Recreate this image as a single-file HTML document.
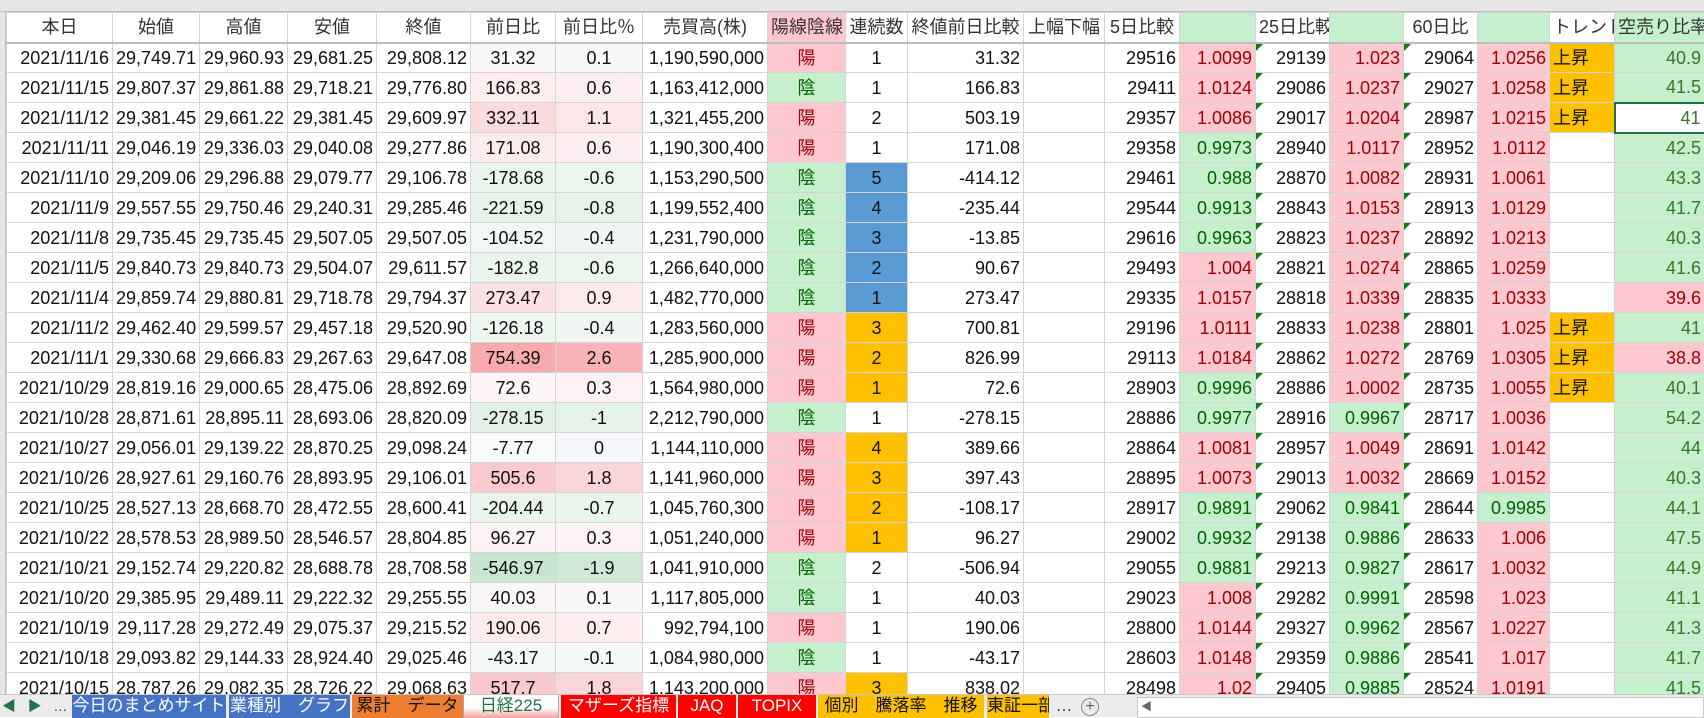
<!DOCTYPE html>
<html><head><meta charset="utf-8">
<style>
*{margin:0;padding:0;box-sizing:border-box}
body{width:1704px;height:717px;overflow:hidden;background:#fff;font-family:"Liberation Sans","Noto Sans CJK JP",sans-serif;position:relative}
#colhdr{position:absolute;left:0;top:0;width:1704px;height:12px;background:#e6e6e6;border-bottom:1px solid #bdbdbd}
#rowhdr{position:absolute;left:0;top:12px;width:6px;height:682px;background:#e6e6e6;border-right:1px solid #bdbdbd}
table{position:absolute;left:6px;top:12px;border-collapse:collapse;table-layout:fixed;width:1698px}
td{height:30px;border:1px solid #d4d4d4;font-size:18px;color:#111;white-space:nowrap;overflow:hidden;padding:0 3px;text-align:right;line-height:28px;position:relative}
tr.h td{text-align:center;color:#333;border-bottom:2px solid #bdbdbd}
td.c{text-align:center}
td.l{text-align:left}
.pk{background:#ffc7ce;color:#9c0006}
.gn{background:#c6efce;color:#006100}
.or{background:#ffc000}
.bl{background:#5b9bd5}
.tg{background:#c6efce;color:#38762a}
.tp{background:#ffc7ce;color:#9c0006}
.tri::before{content:"";position:absolute;left:0;top:0;border-top:7px solid #107c10;border-right:7px solid transparent}
#tabs{position:absolute;left:0;top:694px;width:1704px;height:23px;background:#ececec;border-top:1px solid #c8c8c8;font-size:17px}
.tab{position:absolute;top:0;height:23px;line-height:22px;text-align:center;white-space:nowrap;overflow:hidden}
</style></head><body>
<div id="colhdr"></div><div id="rowhdr"></div>
<table>
<colgroup><col style="width:106px"><col style="width:87px"><col style="width:88px"><col style="width:89px"><col style="width:94px"><col style="width:85px"><col style="width:87px"><col style="width:125px"><col style="width:78px"><col style="width:62px"><col style="width:116px"><col style="width:81px"><col style="width:75px"><col style="width:76px"><col style="width:74px"><col style="width:74px"><col style="width:74px"><col style="width:72px"><col style="width:65px"><col style="width:90px"></colgroup>
<tr class="h"><td>本日</td><td>始値</td><td>高値</td><td>安値</td><td>終値</td><td>前日比</td><td>前日比％</td><td>売買高(株)</td><td class="pk">陽線陰線</td><td>連続数</td><td>終値前日比較</td><td class="l">上幅下幅</td><td class="l">5日比較</td><td class="gn"></td><td class="l">25日比較</td><td class="gn"></td><td class="l">60日比</td><td class="gn"></td><td class="l">トレンド</td><td class="tg l">空売り比率</td></tr>
<tr><td>2021/11/16</td><td>29,749.71</td><td>29,960.93</td><td>29,681.25</td><td>29,808.12</td><td class="c" style="background:#fbf8fb">31.32</td><td class="c" style="background:#fbf8fb">0.1</td><td>1,190,590,000</td><td class="c pk">陽</td><td class="c">1</td><td>31.32</td><td></td><td>29516</td><td class="pk">1.0099</td><td class="tri">29139</td><td class="pk">1.023</td><td class="tri">29064</td><td class="pk">1.0256</td><td class="l or">上昇</td><td class="tg">40.9</td></tr>
<tr><td>2021/11/15</td><td>29,807.37</td><td>29,861.88</td><td>29,718.21</td><td>29,776.80</td><td class="c" style="background:#fdedef">166.83</td><td class="c" style="background:#fdeff1">0.6</td><td>1,163,412,000</td><td class="c gn">陰</td><td class="c">1</td><td>166.83</td><td></td><td>29411</td><td class="pk">1.0124</td><td class="tri">29086</td><td class="pk">1.0237</td><td class="tri">29027</td><td class="pk">1.0258</td><td class="l or">上昇</td><td class="tg">41.5</td></tr>
<tr><td>2021/11/12</td><td>29,381.45</td><td>29,661.22</td><td>29,381.45</td><td>29,609.97</td><td class="c" style="background:#fbdbdd">332.11</td><td class="c" style="background:#fce6e8">1.1</td><td>1,321,455,200</td><td class="c pk">陽</td><td class="c">2</td><td>503.19</td><td></td><td>29357</td><td class="pk">1.0086</td><td class="tri">29017</td><td class="pk">1.0204</td><td class="tri">28987</td><td class="pk">1.0215</td><td class="l or">上昇</td><td style="border:2px solid #217346;color:#38762a">41</td></tr>
<tr><td>2021/11/11</td><td>29,046.19</td><td>29,336.03</td><td>29,040.08</td><td>29,277.86</td><td class="c" style="background:#fdecee">171.08</td><td class="c" style="background:#fdeff1">0.6</td><td>1,190,300,400</td><td class="c pk">陽</td><td class="c">1</td><td>171.08</td><td></td><td>29358</td><td class="gn">0.9973</td><td class="tri">28940</td><td class="pk">1.0117</td><td class="tri">28952</td><td class="pk">1.0112</td><td></td><td class="tg">42.5</td></tr>
<tr><td>2021/11/10</td><td>29,209.06</td><td>29,296.88</td><td>29,079.77</td><td>29,106.78</td><td class="c" style="background:#eaf5ee">-178.68</td><td class="c" style="background:#ebf6ef">-0.6</td><td>1,153,290,500</td><td class="c gn">陰</td><td class="c bl">5</td><td>-414.12</td><td></td><td>29461</td><td class="gn">0.988</td><td class="tri">28870</td><td class="pk">1.0082</td><td class="tri">28931</td><td class="pk">1.0061</td><td></td><td class="tg">43.3</td></tr>
<tr><td>2021/11/9</td><td>29,557.55</td><td>29,750.46</td><td>29,240.31</td><td>29,285.46</td><td class="c" style="background:#e6f3ea">-221.59</td><td class="c" style="background:#e6f3ea">-0.8</td><td>1,199,552,400</td><td class="c gn">陰</td><td class="c bl">4</td><td>-235.44</td><td></td><td>29544</td><td class="gn">0.9913</td><td class="tri">28843</td><td class="pk">1.0153</td><td class="tri">28913</td><td class="pk">1.0129</td><td></td><td class="tg">41.7</td></tr>
<tr><td>2021/11/8</td><td>29,735.45</td><td>29,735.45</td><td>29,507.05</td><td>29,507.05</td><td class="c" style="background:#f1f8f3">-104.52</td><td class="c" style="background:#f0f7f2">-0.4</td><td>1,231,790,000</td><td class="c gn">陰</td><td class="c bl">3</td><td>-13.85</td><td></td><td>29616</td><td class="gn">0.9963</td><td class="tri">28823</td><td class="pk">1.0237</td><td class="tri">28892</td><td class="pk">1.0213</td><td></td><td class="tg">40.3</td></tr>
<tr><td>2021/11/5</td><td>29,840.73</td><td>29,840.73</td><td>29,504.07</td><td>29,611.57</td><td class="c" style="background:#eaf5ee">-182.8</td><td class="c" style="background:#ebf6ef">-0.6</td><td>1,266,640,000</td><td class="c gn">陰</td><td class="c bl">2</td><td>90.67</td><td></td><td>29493</td><td class="pk">1.004</td><td class="tri">28821</td><td class="pk">1.0274</td><td class="tri">28865</td><td class="pk">1.0259</td><td></td><td class="tg">41.6</td></tr>
<tr><td>2021/11/4</td><td>29,859.74</td><td>29,880.81</td><td>29,718.78</td><td>29,794.37</td><td class="c" style="background:#fce2e4">273.47</td><td class="c" style="background:#fdeaec">0.9</td><td>1,482,770,000</td><td class="c gn">陰</td><td class="c bl">1</td><td>273.47</td><td></td><td>29335</td><td class="pk">1.0157</td><td class="tri">28818</td><td class="pk">1.0339</td><td class="tri">28835</td><td class="pk">1.0333</td><td></td><td class="tp">39.6</td></tr>
<tr><td>2021/11/2</td><td>29,462.40</td><td>29,599.57</td><td>29,457.18</td><td>29,520.90</td><td class="c" style="background:#eff7f1">-126.18</td><td class="c" style="background:#f0f7f2">-0.4</td><td>1,283,560,000</td><td class="c pk">陽</td><td class="c or">3</td><td>700.81</td><td></td><td>29196</td><td class="pk">1.0111</td><td class="tri">28833</td><td class="pk">1.0238</td><td class="tri">28801</td><td class="pk">1.025</td><td class="l or">上昇</td><td class="tg">41</td></tr>
<tr><td>2021/11/1</td><td>29,330.68</td><td>29,666.83</td><td>29,267.63</td><td>29,647.08</td><td class="c" style="background:#f8aaad">754.39</td><td class="c" style="background:#f9b4b7">2.6</td><td>1,285,900,000</td><td class="c pk">陽</td><td class="c or">2</td><td>826.99</td><td></td><td>29113</td><td class="pk">1.0184</td><td class="tri">28862</td><td class="pk">1.0272</td><td class="tri">28769</td><td class="pk">1.0305</td><td class="l or">上昇</td><td class="tp">38.8</td></tr>
<tr><td>2021/10/29</td><td>28,819.16</td><td>29,000.65</td><td>28,475.06</td><td>28,892.69</td><td class="c" style="background:#fdf4f6">72.6</td><td class="c" style="background:#fdf3f5">0.3</td><td>1,564,980,000</td><td class="c pk">陽</td><td class="c or">1</td><td>72.6</td><td></td><td>28903</td><td class="gn">0.9996</td><td class="tri">28886</td><td class="pk">1.0002</td><td class="tri">28735</td><td class="pk">1.0055</td><td class="l or">上昇</td><td class="tg">40.1</td></tr>
<tr><td>2021/10/28</td><td>28,871.61</td><td>28,895.11</td><td>28,693.06</td><td>28,820.09</td><td class="c" style="background:#e2f1e7">-278.15</td><td class="c" style="background:#e4f2e8">-1</td><td>2,212,790,000</td><td class="c gn">陰</td><td class="c">1</td><td>-278.15</td><td></td><td>28886</td><td class="gn">0.9977</td><td class="tri">28916</td><td class="gn">0.9967</td><td class="tri">28717</td><td class="pk">1.0036</td><td></td><td class="tg">54.2</td></tr>
<tr><td>2021/10/27</td><td>29,056.01</td><td>29,139.22</td><td>28,870.25</td><td>29,098.24</td><td class="c" style="background:#f8fbfa">-7.77</td><td class="c" style="background:#f8f8fc">0</td><td>1,144,110,000</td><td class="c pk">陽</td><td class="c or">4</td><td>389.66</td><td></td><td>28864</td><td class="pk">1.0081</td><td class="tri">28957</td><td class="pk">1.0049</td><td class="tri">28691</td><td class="pk">1.0142</td><td></td><td class="tg">44</td></tr>
<tr><td>2021/10/26</td><td>28,927.61</td><td>29,160.76</td><td>28,893.95</td><td>29,106.01</td><td class="c" style="background:#facacc">505.6</td><td class="c" style="background:#fbd6d8">1.8</td><td>1,141,960,000</td><td class="c pk">陽</td><td class="c or">3</td><td>397.43</td><td></td><td>28895</td><td class="pk">1.0073</td><td class="tri">29013</td><td class="pk">1.0032</td><td class="tri">28669</td><td class="pk">1.0152</td><td></td><td class="tg">40.3</td></tr>
<tr><td>2021/10/25</td><td>28,527.13</td><td>28,668.70</td><td>28,472.55</td><td>28,600.41</td><td class="c" style="background:#e8f4ec">-204.44</td><td class="c" style="background:#e9f5ed">-0.7</td><td>1,045,760,300</td><td class="c pk">陽</td><td class="c or">2</td><td>-108.17</td><td></td><td>28917</td><td class="gn">0.9891</td><td class="tri">29062</td><td class="gn">0.9841</td><td class="tri">28644</td><td class="gn">0.9985</td><td></td><td class="tg">44.1</td></tr>
<tr><td>2021/10/22</td><td>28,578.53</td><td>28,989.50</td><td>28,546.57</td><td>28,804.85</td><td class="c" style="background:#fdf3f5">96.27</td><td class="c" style="background:#fdf3f5">0.3</td><td>1,051,240,000</td><td class="c pk">陽</td><td class="c or">1</td><td>96.27</td><td></td><td>29002</td><td class="gn">0.9932</td><td class="tri">29138</td><td class="gn">0.9886</td><td class="tri">28633</td><td class="pk">1.006</td><td></td><td class="tg">47.5</td></tr>
<tr><td>2021/10/21</td><td>29,152.74</td><td>29,220.82</td><td>28,688.78</td><td>28,708.58</td><td class="c" style="background:#c8e6d0">-546.97</td><td class="c" style="background:#cfe9d6">-1.9</td><td>1,041,910,000</td><td class="c gn">陰</td><td class="c">2</td><td>-506.94</td><td></td><td>29055</td><td class="gn">0.9881</td><td class="tri">29213</td><td class="gn">0.9827</td><td class="tri">28617</td><td class="pk">1.0032</td><td></td><td class="tg">44.9</td></tr>
<tr><td>2021/10/20</td><td>29,385.95</td><td>29,489.11</td><td>29,222.32</td><td>29,255.55</td><td class="c" style="background:#fcf8fa">40.03</td><td class="c" style="background:#fbf8fb">0.1</td><td>1,117,805,000</td><td class="c gn">陰</td><td class="c">1</td><td>40.03</td><td></td><td>29023</td><td class="pk">1.008</td><td class="tri">29282</td><td class="gn">0.9991</td><td class="tri">28598</td><td class="pk">1.023</td><td></td><td class="tg">41.1</td></tr>
<tr><td>2021/10/19</td><td>29,117.28</td><td>29,272.49</td><td>29,075.37</td><td>29,215.52</td><td class="c" style="background:#fdebed">190.06</td><td class="c" style="background:#fdeef0">0.7</td><td>992,794,100</td><td class="c pk">陽</td><td class="c">1</td><td>190.06</td><td></td><td>28800</td><td class="pk">1.0144</td><td class="tri">29327</td><td class="gn">0.9962</td><td class="tri">28567</td><td class="pk">1.0227</td><td></td><td class="tg">41.3</td></tr>
<tr><td>2021/10/18</td><td>29,093.82</td><td>29,144.33</td><td>28,924.40</td><td>29,025.46</td><td class="c" style="background:#f5f9f8">-43.17</td><td class="c" style="background:#f6f9f9">-0.1</td><td>1,084,980,000</td><td class="c gn">陰</td><td class="c">1</td><td>-43.17</td><td></td><td>28603</td><td class="pk">1.0148</td><td class="tri">29359</td><td class="gn">0.9886</td><td class="tri">28541</td><td class="pk">1.017</td><td></td><td class="tg">41.7</td></tr>
<tr><td>2021/10/15</td><td>28,787.26</td><td>29,082.35</td><td>28,726.22</td><td>29,068.63</td><td class="c" style="background:#f9c9cb">517.7</td><td class="c" style="background:#fbd6d8">1.8</td><td>1,143,200,000</td><td class="c pk">陽</td><td class="c or">3</td><td>838.02</td><td></td><td>28498</td><td class="pk">1.02</td><td class="tri">29405</td><td class="gn">0.9885</td><td class="tri">28524</td><td class="pk">1.0191</td><td></td><td class="tg">41.5</td></tr>
</table>
<div id="tabs">
<div class="tab" style="left:0;width:70px;color:#217346;font-size:14px;text-align:left;padding-left:2px">◀&nbsp;&nbsp;&nbsp;▶&nbsp;&nbsp;&nbsp;<span style="color:#333">…</span></div>
<div class="tab" style="left:72px;width:154px;background:#4472c4;color:#fff">今日のまとめサイト</div>
<div class="tab" style="left:229px;width:121px;background:#4472c4;color:#fff">業種別　グラフ</div>
<div class="tab" style="left:352px;width:111px;background:#ed7d31;color:#111">累計　データ</div>
<div class="tab" style="left:463px;width:96px;background:linear-gradient(#fff,#fff 55%,#f4a0a0);color:#217346;border-left:1px solid #aaa;border-right:1px solid #aaa">日経225</div>
<div class="tab" style="left:561px;width:115px;background:#ff0000;color:#fff">マザーズ指標</div>
<div class="tab" style="left:678px;width:58px;background:#ff0000;color:#fff">JAQ</div>
<div class="tab" style="left:738px;width:78px;background:#ff0000;color:#fff">TOPIX</div>
<div class="tab" style="left:818px;width:166px;background:#ffc000;color:#111">個別　騰落率　推移</div>
<div class="tab" style="left:987px;width:62px;background:#ffc000;color:#111;text-align:left">東証一部</div>
<div class="tab" style="left:1054px;width:20px;color:#333">…</div>
<div class="tab" style="left:1081px;top:3px;width:18px;height:18px;border:1px solid #888;border-radius:50%;line-height:15px;color:#666;font-size:16px">+</div>
<div class="tab" style="left:1115px;width:6px;color:#aaa;font-size:14px">⋮</div>
<div class="tab" style="left:1137px;top:2px;width:567px;height:21px;background:#fff;border:1px solid #c8c8c8;text-align:left;font-size:11px;line-height:19px;color:#666;padding-left:3px">◀</div>
</div>
</body></html>
